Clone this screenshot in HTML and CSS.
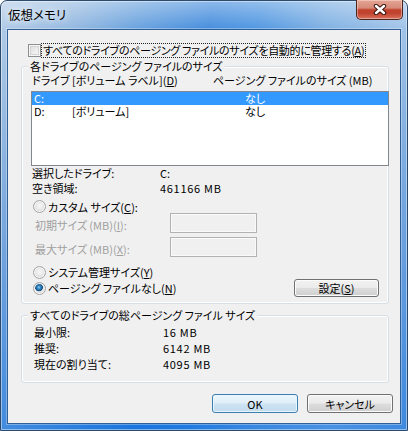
FILE: index.html
```html
<!DOCTYPE html>
<html lang="ja">
<head>
<meta charset="utf-8">
<title>仮想メモリ</title>
<link rel="stylesheet" href="styles.css">
</head>
<body>
<div class="window">
  <div class="titlebar">
    <span class="title">仮想メモリ</span>
    <div class="close" aria-label="閉じる">
      <svg width="14" height="11" viewBox="0 0 14 11">
        <path d="M3 2 L11 9 M11 2 L3 9" stroke="#3a1410" stroke-width="4.4" stroke-linecap="round"/>
        <path d="M3 2 L11 9 M11 2 L3 9" stroke="#ffffff" stroke-width="2.4" stroke-linecap="round"/>
      </svg>
    </div>
  </div>
  <div class="client">
    <div class="auto-row">
      <span class="checkbox"></span>
      <span class="focus">すべてのドライブのページング ファイルのサイズを自動的に管理する(<u>A</u>)</span>
    </div>

    <div class="group g1">
      <div class="group-title">各ドライブのページング ファイルのサイズ</div>
      <div class="list-head">
        <span>ドライブ [ボリューム ラベル](<u>D</u>)</span>
        <span>ページング ファイルのサイズ (MB)</span>
      </div>
      <div class="listbox">
        <div class="item selected"><span>C:</span><span></span><span>なし</span></div>
        <div class="item"><span>D:</span><span>[ボリューム]</span><span>なし</span></div>
      </div>
      <div class="info-row"><span>選択したドライブ:</span><span>C:</span></div>
      <div class="info-row"><span>空き領域:</span><span class="num">461166 MB</span></div>

      <div class="radio-row custom"><span class="radio"></span><span>カスタム サイズ(<u>C</u>):</span></div>
      <div class="size-row"><span class="dis">初期サイズ (MB)(<u>I</u>):</span><span class="textbox"></span></div>
      <div class="size-row second"><span class="dis">最大サイズ (MB)(<u>X</u>):</span><span class="textbox"></span></div>

      <div class="radio-row sys"><span class="radio"></span><span>システム管理サイズ(<u>Y</u>)</span></div>
      <div class="last-row">
        <div class="radio-row"><span class="radio checked"></span><span>ページング ファイルなし(<u>N</u>)</span></div>
        <div class="btn set">設定(<u>S</u>)</div>
      </div>
    </div>

    <div class="group g2">
      <div class="group-title">すべてのドライブの総ページング ファイル サイズ</div>
      <div class="total-row"><span>最小限:</span><span class="num">16 MB</span></div>
      <div class="total-row"><span>推奨:</span><span class="num">6142 MB</span></div>
      <div class="total-row"><span>現在の割り当て:</span><span class="num">4095 MB</span></div>
    </div>

    <div class="buttons">
      <div class="btn default">OK</div>
      <div class="btn">キャンセル</div>
    </div>
  </div>
</div>
</body>
</html>
```

FILE: styles.css
```css
* { box-sizing: border-box; }
html, body { margin: 0; padding: 0; }
body {
  width: 408px;
  height: 431px;
  overflow: hidden;
  background: #ffffff;
  font-family: "Noto Sans CJK JP", "Noto Sans", sans-serif;
  font-size: 11px;
  font-feature-settings: "palt";
  color: #000;
}
u { text-decoration: underline; text-underline-offset: 1px; }

.window {
  width: 408px;
  height: 431px;
  display: flex;
  flex-direction: column;
  padding: 0 6px 6px;
  border: 1px solid #2c4a6b;
  border-radius: 7px 7px 0 0;
  background:
    linear-gradient(180deg, rgba(255,255,255,.45) 0px, rgba(255,255,255,.12) 28px, rgba(255,255,255,0) 90px, rgba(10,100,215,.25) 60%, rgba(10,110,225,.55) 100%),
    linear-gradient(100deg, #a6c4e4 0%, #86afdc 16%, #5495da 30%, #2e7fd9 44%, #3b8ade 54%, #6ea6df 68%, #94bbe5 84%, #7aa9dc 100%);
  box-shadow: inset 0 0 0 1px rgba(255,255,255,.45);
}

.titlebar {
  height: 28px;
  display: flex;
  justify-content: space-between;
  align-items: flex-start;
}
.title {
  margin-top: 6px;
  padding: 0 4px 0 1px;
  line-height: 16px;
  font-size: 12.5px;
  color: #000;
  text-shadow: 0 0 6px rgba(255,255,255,.9), 0 0 10px rgba(255,255,255,.7);
}
.close {
  width: 47px;
  height: 20px;
  margin: -1px -2px 0 0;
  border: 1px solid #4a2520;
  border-top: none;
  border-radius: 0 0 5px 5px;
  background: linear-gradient(180deg, #e4a595 0%, #d68a78 42%, #c2422c 52%, #c0432f 70%, #d9715e 100%);
  box-shadow: inset 0 0 0 1px rgba(255,230,220,.45);
  display: flex;
  align-items: center;
  justify-content: center;
}
.close svg { display: block; }

.client {
  flex: 1;
  display: flex;
  flex-direction: column;
  background: #f0f0f0;
  border: 1px solid #2f5f94;
  box-shadow: 0 0 0 1px rgba(255,255,255,.3);
}

.auto-row {
  display: flex;
  align-items: center;
  height: 13px;
  margin: 14px 0 0 20px;
}
.checkbox {
  flex: none;
  width: 13px;
  height: 13px;
  border: 1px solid #8e8f8f;
  background: linear-gradient(135deg, #d8d8d8 0%, #eeeeee 60%, #fbfbfb 100%);
  box-shadow: inset 0 0 0 1px #f6f6f6, inset 0 0 0 2px #d4d4d4;
}
.focus {
  margin-left: 1px;
  padding: 0 1px;
  height: 13px;
  line-height: 13px;
  outline: 1px dotted #222;
  white-space: nowrap;
  letter-spacing: -0.3px;
}

.group {
  border: 1px solid #d5dfe5;
  border-radius: 3px;
  box-shadow: inset 0 0 0 1px #fff;
  margin: 0 11px 0 13px;
}
.group-title {
  width: fit-content;
  margin: -8px 0 0 6px;
  padding: 0 2px;
  line-height: 14px;
  background: #f0f0f0;
  white-space: nowrap;
}
.g1 { margin-top: 9px; padding-bottom: 6px; }
.g2 { margin-top: 11px; padding-bottom: 10px; }

.list-head {
  display: grid;
  grid-template-columns: 181px auto;
  padding-left: 10px;
  line-height: 14px;
  white-space: nowrap;
}
.listbox {
  margin: 4px 0 0 9px;
  width: 358px;
  height: 75px;
  border: 1px solid #828790;
  background: #fff;
}
.item {
  display: grid;
  grid-template-columns: 38px 173px auto;
  padding-left: 2px;
  height: 13px;
  line-height: 13px;
  white-space: nowrap;
}
.item.selected { background: #3399ff; color: #fff; }

.info-row {
  display: grid;
  grid-template-columns: 128px auto;
  padding-left: 10px;
  line-height: 15px;
  white-space: nowrap;
}
.num { letter-spacing: 0.7px; }

.radio-row {
  display: flex;
  align-items: center;
  gap: 2px;
  white-space: nowrap;
  line-height: 14px;
}
.custom { margin: 4px 0 0 11px; height: 13px; }
.sys { margin: 8px 0 0 11px; height: 14px; }
.radio {
  width: 13px;
  height: 13px;
  flex: none;
  border-radius: 50%;
  border: 1px solid #a5a5a5;
  background: radial-gradient(circle at 50% 45%, #f6f6f6 0, #ececec 3px, #d6d6d6 6px);
  box-shadow: inset 0 0 0 1px #f8f8f8;
}
.radio.checked {
  background: radial-gradient(circle at 45% 40%, #9ad6f4 0, #3a8cc4 1.5px, #134f86 3.6px, #e4e4e4 4.2px, #dadada 6px);
}

.size-row {
  display: grid;
  grid-template-columns: 135px 87px;
  align-items: center;
  height: 20px;
  padding-left: 13px;
  white-space: nowrap;
}
.size-row.second { margin-top: 4px; }
.dis { color: #a0a0a0; padding-top: 3px; line-height: 14px; }
.textbox {
  height: 20px;
  border: 1px solid #b2b2b2;
  background: #f0f0f0;
  box-shadow: inset 0 0 0 1px #fafafa;
}

.last-row {
  display: flex;
  justify-content: space-between;
  align-items: center;
  height: 18px;
  padding: 0 9px 0 11px;
}

.btn {
  display: flex;
  align-items: center;
  justify-content: center;
  width: 86px;
  height: 19px;
  border: 1px solid #707070;
  border-radius: 3px;
  background: linear-gradient(180deg, #f2f2f2 0%, #ebebeb 48%, #dddddd 52%, #cfcfcf 100%);
  box-shadow: inset 0 0 0 1px #fcfcfc;
  white-space: nowrap;
  line-height: 14px;
}
.btn.set { width: 85px; height: 18px; }
.btn.default {
  border-color: #3c7fb1;
  background: linear-gradient(180deg, #eef7fc 0%, #e0eef8 48%, #cde3f2 52%, #c2dcef 100%);
  box-shadow: inset 0 0 0 1px #e9f6fd;
}

.total-row {
  display: grid;
  grid-template-columns: 129px auto;
  padding-left: 12px;
  line-height: 16px;
  white-space: nowrap;
}
.g2 .group-title { margin-bottom: 2px; }

.buttons {
  display: flex;
  justify-content: flex-end;
  gap: 9px;
  margin-top: 11px;
  padding-right: 7px;
}
```
